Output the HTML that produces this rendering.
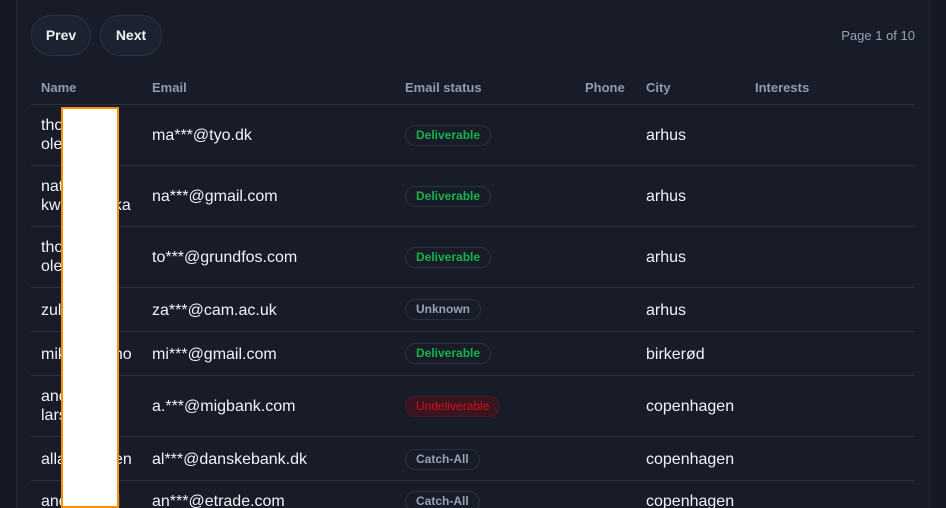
<!DOCTYPE html>
<html style="overflow:hidden;height:508px"><head><style>
body{margin:0;width:946px;height:508px;overflow:hidden;position:relative;background:#141925;font-family:"Liberation Sans",sans-serif;color:#f1f3f6}
.c{position:absolute;left:16px;top:-10px;width:912px;height:530px;border:1px solid #262c38;background:#171c28}
.btn{position:absolute;top:15px;height:39px;border:1px solid #2c3240;border-radius:20px;background:#1c2230;font-weight:bold;font-size:14px;line-height:39px;text-align:center;color:#eef0f3}
.pg{position:absolute;right:31px;top:28px;font-size:13px;color:#98a2b3}
.h{position:absolute;top:80px;font-size:13px;font-weight:bold;color:#8f9bb0}
.line{position:absolute;left:31px;width:884px;height:1px;background:#2a303c}
.t{position:absolute;font-size:16px;color:#f1f3f6;line-height:19px}
.b{position:absolute;left:405px;height:21px;border:1px solid #2b3140;border-radius:11px;font-size:12px;font-weight:bold;line-height:19px;padding:0 10px;box-sizing:border-box}
.g{color:#17b34a}.u{color:#98a2b3}.r{color:#d1101a;background:#3a1520;border-color:#4a1a26;font-weight:normal}
.mask{position:absolute;left:61px;top:107px;width:54px;height:410px;background:#fff;border:2px solid #f79009}
</style></head><body>
<div class="c"></div>
<div class="btn" style="left:31px;width:58px">Prev</div>
<div class="btn" style="left:100px;width:60px">Next</div>
<div class="pg">Page 1 of 10</div>
<div class="h" style="left:41px">Name</div>
<div class="h" style="left:152px">Email</div>
<div class="h" style="left:405px">Email status</div>
<div class="h" style="left:585px">Phone</div>
<div class="h" style="left:646px">City</div>
<div class="h" style="left:755px">Interests</div>
<div class="line" style="top:104px"></div>
<div class="line" style="top:165px"></div>
<div class="line" style="top:226px"></div>
<div class="line" style="top:287px"></div>
<div class="line" style="top:331px"></div>
<div class="line" style="top:375px"></div>
<div class="line" style="top:436px"></div>
<div class="line" style="top:480px"></div>

<div class="t" style="left:41px;top:116px">thomas<br>olesen</div>
<div class="t" style="left:152px;top:126px">ma***@tyo.dk</div>
<div class="b g" style="top:125px">Deliverable</div>
<div class="t" style="left:646px;top:126px">arhus</div>

<div class="t" style="left:41px;top:177px">natalia<br>kwiatkowska</div>
<div class="t" style="left:152px;top:187px">na***@gmail.com</div>
<div class="b g" style="top:186px">Deliverable</div>
<div class="t" style="left:646px;top:187px">arhus</div>

<div class="t" style="left:41px;top:238px">thomas<br>olesen</div>
<div class="t" style="left:152px;top:248px">to***@grundfos.com</div>
<div class="b g" style="top:247px">Deliverable</div>
<div class="t" style="left:646px;top:248px">arhus</div>

<div class="t" style="left:41px;top:301px">zulfiqar</div>
<div class="t" style="left:152px;top:301px">za***@cam.ac.uk</div>
<div class="b u" style="top:299px">Unknown</div>
<div class="t" style="left:646px;top:301px">arhus</div>

<div class="t" style="left:41px;top:345px">mikkel bruno</div>
<div class="t" style="left:152px;top:345px">mi***@gmail.com</div>
<div class="b g" style="top:343px">Deliverable</div>
<div class="t" style="left:646px;top:345px">birkerød</div>

<div class="t" style="left:41px;top:387px">anders<br>larsen</div>
<div class="t" style="left:152px;top:397px">a.***@migbank.com</div>
<div class="b r" style="top:396px">Undeliverable</div>
<div class="t" style="left:646px;top:397px">copenhagen</div>

<div class="t" style="left:41px;top:450px">allan hansen</div>
<div class="t" style="left:152px;top:450px">al***@danskebank.dk</div>
<div class="b u" style="top:449px">Catch-All</div>
<div class="t" style="left:646px;top:450px">copenhagen</div>

<div class="t" style="left:41px;top:492px">anders carl</div>
<div class="t" style="left:152px;top:492px">an***@etrade.com</div>
<div class="b u" style="top:491px">Catch-All</div>
<div class="t" style="left:646px;top:492px">copenhagen</div>

<div class="mask" style="height:397px"></div>
</body></html>
